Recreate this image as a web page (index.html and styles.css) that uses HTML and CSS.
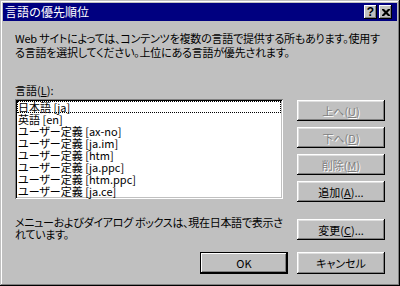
FILE: index.html
```html
<!DOCTYPE html>
<html lang="ja">
<head>
<meta charset="utf-8">
<link rel="stylesheet" href="styles.css">
</head>
<body>
<div class="window">
  <div class="titlebar">
    <span class="title">言語の優先順位</span>
    <div class="caption-btns">
      <span class="cap cap-help">?</span>
      <span class="cap cap-close"><svg width="8" height="7" viewBox="0 0 8 7"><path d="M0 0h2l2 2 2-2h2v1l-2.5 2.5L8 6v1H6L4 5 2 7H0V6l2.5-2.5L0 1z" fill="#000"/></svg></span>
    </div>
  </div>
  <div class="body">
    <p class="intro">Web サイトによっては、コンテンツを複数の言語で提供する所もあります。使用す<br>る言語を選択してください。上位にある言語が優先されます。</p>
    <div class="main">
      <div class="list-col">
        <div class="label">言語(<u>L</u>):</div>
        <ul class="listbox">
          <li class="focus">日本語 [ja]</li>
          <li>英語 [en]</li>
          <li>ユーザー定義 [ax-no]</li>
          <li>ユーザー定義 [ja.im]</li>
          <li>ユーザー定義 [htm]</li>
          <li>ユーザー定義 [ja.ppc]</li>
          <li>ユーザー定義 [htm.ppc]</li>
          <li>ユーザー定義 [ja.ce]</li>
        </ul>
      </div>
      <div class="btn-col">
        <span class="btn disabled">上へ(<u>U</u>)</span>
        <span class="btn disabled">下へ(<u>D</u>)</span>
        <span class="btn disabled">削除(<u>M</u>)</span>
        <span class="btn">追加(<u>A</u>)...</span>
      </div>
    </div>
    <div class="bottom">
      <p class="note">メニューおよびダイアログ ボックスは、現在日本語で表示さ<br>れています。</p>
      <span class="btn">変更(<u>C</u>)...</span>
    </div>
    <div class="actions">
      <span class="btn default">OK</span>
      <span class="btn">キャンセル</span>
    </div>
  </div>
</div>
</body>
</html>
```

FILE: styles.css
```css
* { box-sizing: border-box; }
html, body { margin: 0; padding: 0; background: #c0c0c0; }
body {
  font-family: "Noto Sans CJK JP", "Liberation Sans", sans-serif;
  font-size: 11px;
  color: #000;
  font-feature-settings: "palt";
}
.window {
  width: 400px;
  height: 286px;
  background: #c0c0c0;
  padding: 3px;
  box-shadow: inset -1px -1px #000, inset 1px 1px #c0c0c0, inset -2px -2px #808080, inset 2px 2px #fff;
  display: flex;
  flex-direction: column;
  overflow: hidden;
}
.titlebar {
  height: 18px;
  flex: none;
  background: #000080;
  color: #fff;
  display: flex;
  align-items: center;
  justify-content: space-between;
  padding: 0 5px 0 2px;
}
.title { font-size: 12px; line-height: 14px; font-feature-settings: normal; }
.caption-btns { display: flex; gap: 2px; }
.cap {
  width: 13px;
  height: 14px;
  background: #c0c0c0;
  box-shadow: inset -1px -1px #000, inset 1px 1px #fff, inset -2px -2px #808080;
  color: #000;
  display: flex;
  align-items: center;
  justify-content: center;
  font-family: "Liberation Sans", sans-serif;
  font-weight: bold;
  font-size: 12px;
  line-height: 12px;
}
.cap-close svg { display: block; }
.body {
  padding: 10px 12px 0 12px;
  display: flex;
  flex-direction: column;
}
.intro {
  margin: 0;
  line-height: 14px;
  white-space: nowrap;
  letter-spacing: -0.2px;
}
.main {
  display: flex;
  gap: 14px;
  margin-top: 24px;
}
.list-col { width: 268px; }
.label { line-height: 14px; margin-bottom: 2px; }
.listbox {
  list-style: none;
  margin: 0;
  padding: 2px;
  height: 100px;
  background: #fff;
  box-shadow: inset 1px 1px #808080, inset -1px -1px #fff, inset 2px 2px #000, inset -2px -2px #c0c0c0;
}
.listbox li {
  height: 12px;
  line-height: 12px;
  padding-left: 1px;
  white-space: nowrap;
}
.listbox li.focus { outline: 1px dotted #000; outline-offset: -1px; }
.btn-col {
  width: 88px;
  display: flex;
  flex-direction: column;
  gap: 6px;
  padding-top: 17px;
}
.btn {
  width: 88px;
  height: 21px;
  background: #c0c0c0;
  box-shadow: inset -1px -1px #000, inset 1px 1px #fff, inset -2px -2px #808080, inset 2px 2px #dfdfdf;
  display: flex;
  align-items: center;
  justify-content: center;
  line-height: 14px;
  white-space: nowrap;
}
.btn.disabled { color: #808080; text-shadow: 1px 1px #fff; }
.btn.default {
  height: 22px;
  box-shadow: inset 0 0 0 1px #000, inset -2px -2px #000, inset 2px 2px #fff, inset -3px -3px #808080;
}
.bottom {
  display: flex;
  justify-content: space-between;
  align-items: flex-start;
  margin-top: 13px;
}
.note { margin: 0; line-height: 12px; white-space: nowrap; padding-top: 1px; letter-spacing: -0.3px; }
.bottom .btn { margin-top: 4px; }
.actions {
  display: flex;
  justify-content: flex-end;
  gap: 9px;
  margin-top: 12px;
}
.actions .btn { height: 22px; }
```
